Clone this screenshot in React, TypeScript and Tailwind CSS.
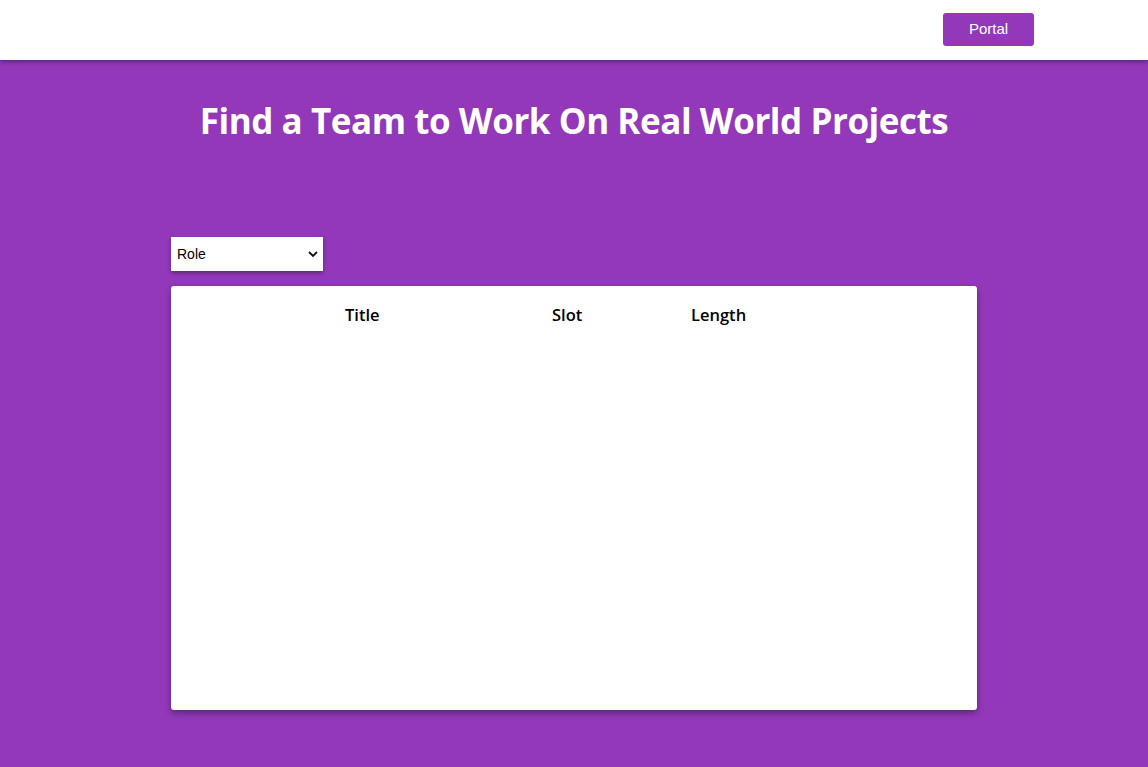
export default function App() {
  return (
    <div className="min-h-[767px] bg-[#9238b9] font-['Open_Sans',sans-serif]">
      <header className="h-[60px] bg-white shadow-[0_2px_4px_rgba(0,0,0,0.35)] relative z-10 flex items-center justify-end pr-[114px]">
        <button className="w-[91px] h-[33px] mt-[-1px] rounded-[3px] bg-[#9238b9] text-white text-[15px] font-['Liberation_Sans',Arial,sans-serif]">
          Portal
        </button>
      </header>

      <main className="flex flex-col items-center">
        <h1 className="mt-[37px] text-white text-[35px] font-bold leading-[48px] tracking-[-0.45px]">
          Find a Team to Work On Real World Projects
        </h1>

        <div className="w-[806px] mt-[92px]">
          <div className="w-[152px] h-[34px] bg-white shadow-[0_2px_4px_rgba(0,0,0,0.35)] flex items-center justify-between pl-[6px] pr-[4px] font-['Liberation_Sans',Arial,sans-serif] text-[14px] text-black">
            <span>Role</span>
            <svg width="12" height="12" viewBox="0 0 12 12" fill="none">
              <path d="M2 4l4 4 4-4" stroke="#111" strokeWidth="1.8" />
            </svg>
          </div>

          <div className="mt-[15px] h-[424px] bg-white rounded-[3px] shadow-[0_3px_6px_rgba(0,0,0,0.35)]">
            <div className="flex pt-[18px] pl-[174px] text-[16.5px] font-semibold text-black leading-[22px]">
              <span className="w-[207px]">Title</span>
              <span className="w-[139px]">Slot</span>
              <span>Length</span>
            </div>
          </div>
        </div>
      </main>
    </div>
  );
}
